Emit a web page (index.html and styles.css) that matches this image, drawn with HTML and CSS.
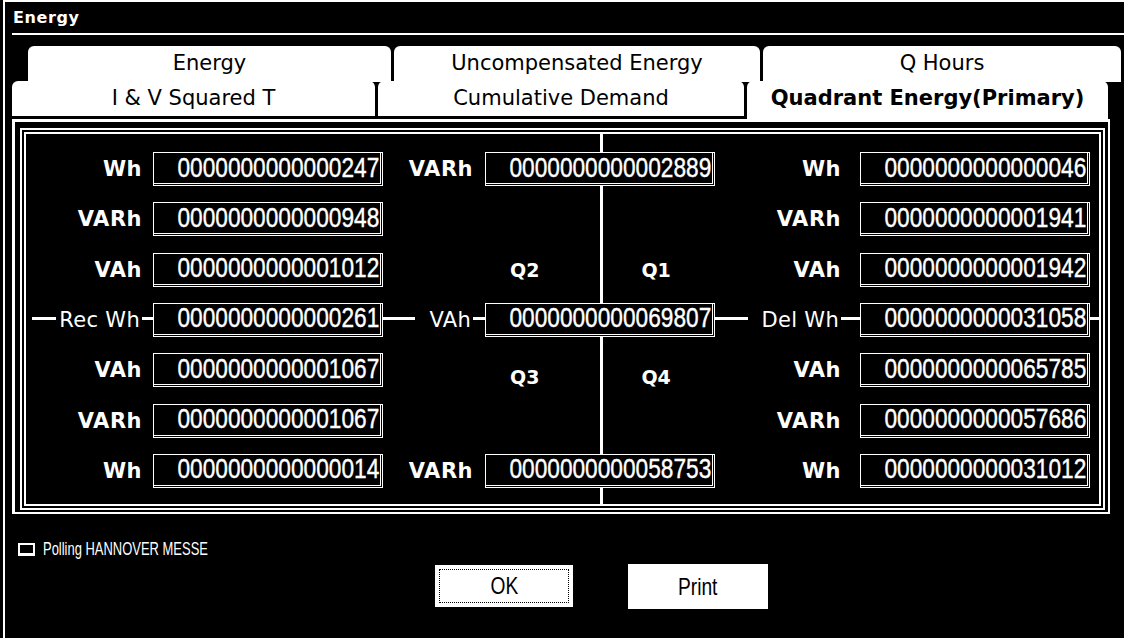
FILE: index.html
```html
<!DOCTYPE html>
<html lang="en">
<head>
    <meta charset="UTF-8">
    <meta name="viewport" content="width=device-width, initial-scale=1.0">
    <title>Energy</title>
    <link rel="stylesheet" href="styles.css">
</head>
<body>
<div class="window">
    <div class="titlebar">Energy</div>

    <div class="tabrow back">
        <div class="tab b1">Energy</div>
        <div class="tab b2">Uncompensated Energy</div>
        <div class="tab b3">Q Hours</div>
    </div>
    <div class="tabrow front">
        <div class="tab f1">I &amp; V Squared T</div>
        <div class="tab f2">Cumulative Demand</div>
        <div class="tab f3 active">Quadrant Energy(Primary)</div>
    </div>

    <div class="panel">
        <div class="group">
            <!-- row 1 -->
            <div class="lbl"><span>Wh</span></div>
            <div class="field"><span>0000000000000247</span></div>
            <div class="lbl"><span>VARh</span></div>
            <div class="field"><span>0000000000002889</span></div>
            <div class="lbl"><span>Wh</span></div>
            <div class="field"><span>0000000000000046</span></div>

            <!-- row 2 -->
            <div class="lbl"><span>VARh</span></div>
            <div class="field"><span>0000000000000948</span></div>
            <div></div>
            <div></div>
            <div class="lbl"><span>VARh</span></div>
            <div class="field"><span>0000000000001941</span></div>

            <!-- row 3 -->
            <div class="lbl"><span>VAh</span></div>
            <div class="field"><span>0000000000001012</span></div>
            <div></div>
            <div class="quads"><span>Q2</span><span>Q1</span></div>
            <div class="lbl"><span>VAh</span></div>
            <div class="field"><span>0000000000001942</span></div>

            <!-- row 4: the axis -->
            <div class="lbl axis"><span class="first">Rec Wh</span></div>
            <div class="field"><span>0000000000000261</span></div>
            <div class="lbl axis"><span>VAh</span></div>
            <div class="field"><span>0000000000069807</span></div>
            <div class="lbl axis"><span>Del Wh</span></div>
            <div class="field"><span>0000000000031058</span></div>

            <!-- row 5 -->
            <div class="lbl"><span>VAh</span></div>
            <div class="field"><span>0000000000001067</span></div>
            <div></div>
            <div class="quads low"><span>Q3</span><span>Q4</span></div>
            <div class="lbl"><span>VAh</span></div>
            <div class="field"><span>0000000000065785</span></div>

            <!-- row 6 -->
            <div class="lbl"><span>VARh</span></div>
            <div class="field"><span>0000000000001067</span></div>
            <div></div>
            <div></div>
            <div class="lbl"><span>VARh</span></div>
            <div class="field"><span>0000000000057686</span></div>

            <!-- row 7 -->
            <div class="lbl"><span>Wh</span></div>
            <div class="field"><span>0000000000000014</span></div>
            <div class="lbl"><span>VARh</span></div>
            <div class="field"><span>0000000000058753</span></div>
            <div class="lbl"><span>Wh</span></div>
            <div class="field"><span>0000000000031012</span></div>
        </div>
    </div>

    <div class="status">
        <svg class="led" width="17" height="13" viewBox="0 0 17 13">
            <rect x="1" y="1" width="15" height="10" fill="none" stroke="#fff" stroke-width="2"/>
            <rect x="0" y="10" width="17" height="3" fill="#fff"/>
        </svg>
        <span class="narrow">Polling HANNOVER MESSE</span>
    </div>

    <div class="buttons">
        <button class="btn ok"><span class="focus"><span class="narrow">OK</span></span></button>
        <button class="btn print"><span class="narrow">Print</span></button>
    </div>
</div>
</body>
</html>
```

FILE: styles.css
```css
body {
    margin: 0;
    width: 1124px;
    height: 638px;
    overflow: hidden;
    background-color: #000;
    color: #fff;
    font-family: "DejaVu Sans", sans-serif;
}

.window {
    margin-left: 3px;
    height: 636px;
    border-top: 2px solid #fff;
    border-left: 2px solid #fff;
}

.titlebar {
    margin-left: 7px;
    height: 30px;
    padding: 1px 0 0 1px;
    border-bottom: 2px solid #fff;
    font-size: 16px;
    font-weight: bold;
    letter-spacing: 0.6px;
    line-height: 30px;
}

/* tabs */

.tabrow {
    display: flex;
    gap: 3px;
}

.tabrow.back {
    margin: 11px 0 0 23px;
    height: 35px;
}

.tabrow.front {
    margin-left: 7px;
    height: 38px;
    align-items: flex-start;
}

.tab {
    display: flex;
    align-items: center;
    justify-content: center;
    height: 35px;
    box-sizing: border-box;
    background-color: #fff;
    color: #000;
    border-radius: 6px 6px 0 0;
    font-size: 21px;
    padding-bottom: 2px;
}

.tabrow.back .tab {
    height: 36px;
}

.b1 { width: 363px; }
.b2 { width: 366px; }
.b3 { width: 358px; }

.f1 { width: 363px; }
.f2 { width: 366px; }
.f3 { width: 361px; }

.tab.active {
    height: 38px;
    font-weight: bold;
    padding-bottom: 4px;
}

/* panel */

.panel {
    margin-left: 7px;
    width: 1098px;
    height: 395px;
    box-sizing: border-box;
    border-style: solid;
    border-color: #fff;
    border-width: 3px 2px 2px 3px;
}

.group {
    margin: 6px 3px 2px 5px;
    height: 382px;
    box-sizing: border-box;
    border: 6px double #fff;
    padding-top: 18px;
    display: grid;
    grid-template-columns: 127px 230px 102px 230px 145px 230px;
    grid-auto-rows: 34px;
    row-gap: 16.33px;
    background-color: #000;
    background-image: linear-gradient(#fff, #fff), linear-gradient(#fff, #fff);
    background-repeat: no-repeat;
    background-position: 574px 0, 6px 183px;
    background-size: 3px 100%, calc(100% - 6px) 3px;
    background-clip: padding-box;
}

.lbl {
    display: flex;
    align-items: center;
    justify-content: flex-end;
    padding-right: 11px;
    font-size: 21px;
    font-weight: bold;
    letter-spacing: 0.5px;
}

.lbl:nth-child(6n+3) {
    padding-right: 12px;
}

.lbl:nth-child(6n+5) {
    padding-right: 19px;
}

.lbl span {
    background-color: #000;
}

.lbl.axis {
    font-weight: normal;
    letter-spacing: 0.3px;
}

.lbl.axis span {
    padding: 0 2px 0 14px;
}

.lbl.axis span.first {
    padding-left: 3px;
}

.field {
    display: flex;
    align-items: center;
    justify-content: flex-end;
    box-sizing: border-box;
    background-color: #000;
    border: 1px solid #fff;
    border-right: 3px double #fff;
    border-bottom: 3px double #fff;
    padding-right: 1px;
    font-family: "Liberation Sans", sans-serif;
    font-size: 27px;
    white-space: nowrap;
    -webkit-text-stroke: 0.4px #fff;
}

.field span {
    flex-shrink: 0;
    transform: scaleX(0.84);
    transform-origin: right center;
}

.quads {
    display: flex;
    align-items: center;
    padding-left: 25px;
    gap: 102px;
    font-size: 19px;
    font-weight: bold;
}

.quads.low {
    padding-top: 14px;
}

/* bottom */

.narrow {
    display: inline-block;
    font-family: "Liberation Sans", sans-serif;
    transform: scaleX(0.72);
    white-space: nowrap;
}

.status {
    display: flex;
    align-items: center;
    gap: 8px;
    margin: 25px 0 0 13px;
    font-size: 18px;
}

.status .narrow {
    transform-origin: left center;
}

.buttons {
    display: flex;
    align-items: flex-start;
    gap: 55px;
    margin: 5px 0 0 430px;
}

.btn {
    width: 138px;
    height: 42px;
    padding: 3px;
    background-color: #fff;
    color: #000;
    border: 1px solid #fff;
    font-size: 24px;
}

.btn .narrow {
    transform: scaleX(0.8);
}

.btn .focus {
    display: flex;
    align-items: center;
    justify-content: center;
    height: 100%;
    box-sizing: border-box;
    border: 1px dotted #000;
}

.btn.print {
    width: 140px;
    height: 45px;
    margin-top: -1px;
}
```
